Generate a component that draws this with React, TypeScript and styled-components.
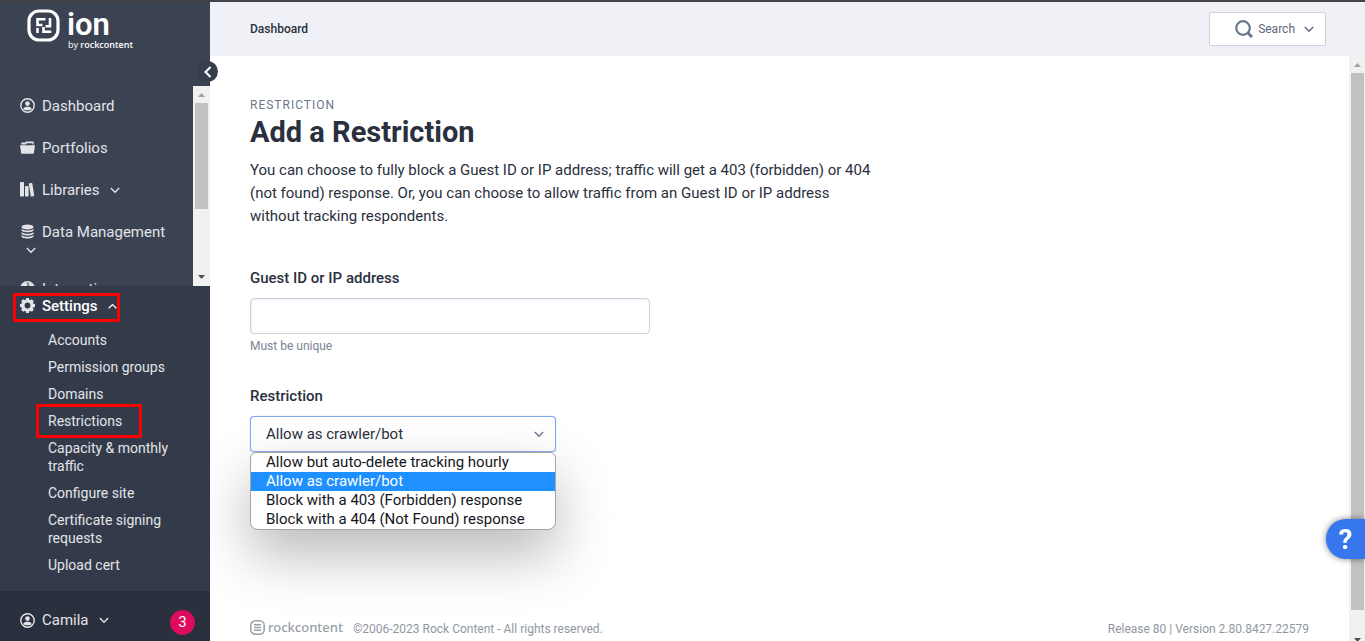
import React from 'react';
import styled, { createGlobalStyle, css } from 'styled-components';

const GlobalStyle = createGlobalStyle`
  *, *::before, *::after { box-sizing: border-box; }
  body {
    margin: 0;
    font-family: Roboto, "Liberation Sans", sans-serif;
    font-size: 15px;
    color: #2a303d;
    background: #fff;
  }
  ul { list-style: none; margin: 0; padding: 0; }
  button, input, select { font: inherit; }
  a { color: inherit; text-decoration: none; }
`;

/* Shell */
const Shell = styled.div`
  display: flex;
  height: 100vh;
  border-top: 2px solid #434248;
  overflow: hidden;
`;

const Sidebar = styled.aside`
  position: relative;
  z-index: 1;
  flex: none;
  display: flex;
  flex-direction: column;
  width: 210px;
  background: #3b4353;
  color: #e3e4e8;
`;

const SidebarHeader = styled.header`
  display: flex;
  gap: 7px;
  flex: none;
  height: 84px;
  padding: 7px 0 0 27px;
  color: #fff;
`;

const Wordmark = styled.div`
  display: flex;
  flex-direction: column;
  font-size: 31px;
  font-weight: 600;
  line-height: 32px;
`;

const Byline = styled.span`
  padding-left: 1px;
  font-family: "Open Sans", sans-serif;
  font-size: 9px;
  font-weight: 400;
  line-height: 8px;
  white-space: nowrap;
  b { font-weight: 600; }
`;

const CollapseButton = styled.button`
  position: absolute;
  top: 59px;
  right: -8px;
  z-index: 2;
  display: flex;
  align-items: center;
  justify-content: center;
  width: 21px;
  height: 21px;
  padding: 0;
  border: 0;
  border-radius: 50%;
  background: #363e4d;
  color: #fff;
`;

const NavArea = styled.div`
  display: flex;
  flex: 1;
  min-height: 0;
  overflow: hidden;
`;

const NavList = styled.ul`
  flex: 1;
  display: flex;
  flex-direction: column;
  gap: 24px;
  padding: 11px 10px 0 20px;
`;

const NavLink = styled.a<{ $active?: boolean }>`
  position: relative;
  display: flex;
  flex-wrap: wrap;
  align-items: center;
  column-gap: 7px;
  line-height: 18px;
  color: ${(p) => (p.$active ? '#fff' : 'inherit')};
  font-weight: ${(p) => (p.$active ? 500 : 400)};
  > svg { margin-bottom: 1px; }
`;

const Caret = styled.span<{ $wrapped?: boolean }>`
  display: flex;
  align-items: center;
  height: 15px;
  margin-left: 3px;
  ${(p) =>
    p.$wrapped &&
    css`
      flex-basis: 100%;
      padding: 3px 0 0 3px;
    `}
`;

/* Scrollbars */
const Track = styled.div<{ $width: number; $below: number }>`
  flex: none;
  display: flex;
  flex-direction: column;
  align-items: center;
  width: ${(p) => p.$width}px;
  margin-bottom: -${(p) => p.$below}px;
  background: #f1f1f1;
  overflow: hidden;
`;

const Arrow = styled.span<{ $down?: boolean }>`
  flex: none;
  display: flex;
  align-items: center;
  justify-content: center;
  height: 17px;
  color: ${(p) => (p.$down ? '#505050' : '#a3a3a3')};
  transform: ${(p) => (p.$down ? 'rotate(180deg)' : 'none')};
`;

const Rail = styled.div`
  flex: 1;
  width: 13px;
`;

const Thumb = styled.div<{ $share: number }>`
  height: ${(p) => p.$share}%;
  background: #c1c1c1;
`;

/* Settings group */
const SettingsPanel = styled.nav`
  flex: none;
  padding: 11px 20px 17px;
  background: #333b4a;
`;

const SubList = styled.ul`
  display: flex;
  flex-direction: column;
  gap: 9px;
  padding: 16px 0 0 28px;
  font-size: 14px;
  line-height: 18px;
`;

const SubLink = styled.a`
  position: relative;
  display: block;
`;

const Highlight = styled.span<{ $inset: string }>`
  position: absolute;
  inset: ${(p) => p.$inset};
  border: 3px solid #f00;
  border-radius: 1px;
  pointer-events: none;
`;

const UserBar = styled.footer`
  flex: none;
  display: flex;
  align-items: center;
  justify-content: space-between;
  height: 50px;
  padding: 8px 15px 0 20px;
  background: #2a303d;
`;

const UserButton = styled.button`
  display: flex;
  align-items: center;
  gap: 7px;
  padding: 0;
  border: 0;
  background: none;
  color: inherit;
`;

const Badge = styled.span`
  display: flex;
  align-items: center;
  justify-content: center;
  width: 25px;
  height: 25px;
  margin-top: 4px;
  border-radius: 50%;
  background: #dc0b5b;
  color: #fff;
`;

/* Main column */
const Main = styled.div`
  flex: 1;
  min-width: 0;
  display: flex;
  flex-direction: column;
`;

const TopBar = styled.header`
  flex: none;
  display: flex;
  align-items: center;
  justify-content: space-between;
  height: 54px;
  padding: 0 39px 0 40px;
  background: #f0f1f7;
  font-size: 12px;
`;

const Crumb = styled.a`
  font-weight: 500;
`;

const SearchButton = styled.button`
  display: flex;
  align-items: center;
  justify-content: flex-end;
  gap: 5px;
  width: 117px;
  height: 34px;
  padding: 0 11px 0 0;
  border: 1px solid #cbd1df;
  border-radius: 2px;
  background: #fff;
  color: #5c667a;
  font-size: 12px;
  svg:last-child { margin-left: 4px; }
`;

const Body = styled.div`
  flex: 1;
  display: flex;
  min-height: 0;
`;

const Page = styled.main`
  flex: 1;
  display: flex;
  flex-direction: column;
  justify-content: space-between;
  padding: 41px 40px 2px;
`;

const Eyebrow = styled.p`
  margin: 0;
  font-size: 12px;
  line-height: 16px;
  letter-spacing: 1px;
  color: #6b778c;
`;

const Title = styled.h1`
  margin: 0;
  font-size: 29px;
  font-weight: 700;
  line-height: 38px;
`;

const Intro = styled.p`
  max-width: 630px;
  margin: 8px 0 0;
  line-height: 23px;
`;

const Field = styled.div<{ $width: number; $space: number }>`
  position: relative;
  display: flex;
  flex-direction: column;
  width: ${(p) => p.$width}px;
  margin-top: ${(p) => p.$space}px;
`;

const Label = styled.label`
  margin-bottom: 10px;
  font-weight: 500;
  line-height: 20px;
`;

const TextInput = styled.input`
  height: 36px;
  padding: 0 15px;
  border: 1px solid #cbd1df;
  border-radius: 4px;
  box-shadow: inset 1px 1px 2px #eceef4;
`;

const Hint = styled.p`
  margin: 4px 0 0;
  font-size: 12px;
  line-height: 16px;
  color: #7a8496;
`;

const SelectBox = styled.div`
  position: relative;
  display: grid;
  align-items: center;
  color: #6b778c;
  > * { grid-area: 1 / 1; }
  svg {
    justify-self: end;
    margin-right: 12px;
    z-index: 1;
    pointer-events: none;
  }
`;

const Select = styled.select`
  appearance: none;
  width: 100%;
  height: 36px;
  padding: 0 15px;
  border: 1px solid #84a9ee;
  border-radius: 4px;
  background: #fff;
  box-shadow: 0 0 1px #84a9ee;
  color: #2a303d;
`;

const Options = styled.ul`
  position: absolute;
  top: 100%;
  left: 0;
  right: 0;
  border: 1px solid #a6a6a6;
  border-radius: 6px 6px 8px 8px;
  background: #fff;
  box-shadow: 0 25px 56px rgba(0, 0, 0, 0.28);
  color: #14171d;
  overflow: hidden;
`;

const Option = styled.li<{ $selected?: boolean }>`
  padding: 0 15px;
  line-height: 19px;
  ${(p) =>
    p.$selected &&
    css`
      background: #1e90ff;
      color: #fff;
    `}
`;

const PageFooter = styled.footer`
  display: flex;
  align-items: center;
  color: #9097a3;
  font-size: 12px;
  line-height: 16px;
`;

const FooterLogo = styled.a`
  display: flex;
  align-items: center;
  gap: 3px;
  margin: 0 10px 4px 0;
  font-family: "Noto Sans", sans-serif;
  font-size: 13px;
  font-weight: 500;
  color: #98a0a6;
`;

const Release = styled.span`
  margin-left: auto;
`;

const HelpButton = styled.button`
  position: fixed;
  right: 0;
  bottom: 82px;
  z-index: 3;
  width: 39px;
  height: 40px;
  padding: 0;
  border: 0;
  border-radius: 20px 0 0 20px;
  background: #3677ee;
  box-shadow: 0 0 6px rgba(0, 0, 0, 0.5);
  color: #fff;
  font-size: 28px;
  font-weight: 700;
`;

/* Drawings */
const Chevron = ({ up, size = 10 }: { up?: boolean; size?: number }) => (
  <svg width={size} height={size} viewBox="0 0 10 10" fill="none" stroke="currentColor" strokeWidth="1.4">
    <path d={up ? 'M.8 7 5 2.8 9.2 7' : 'M.8 3 5 7.2 9.2 3'} />
  </svg>
);

const IonMark = () => (
  <svg width="33" height="33" viewBox="0 0 33 33" fill="none" stroke="#fff" strokeWidth="3.200">
    <rect x="2" y="2" width="29" height="29" rx="10" />
    <path d="M18.500 10.300H10.500V16h5M23 9v8.300h-4.500M24.300 22.700h-7.800V18M10.500 24v-5" strokeWidth="2.600" />
  </svg>
);

const UserIcon = () => (
  <svg width="15" height="15" viewBox="0 0 15 15">
    <circle cx="7.5" cy="7.5" r="6.7" fill="none" stroke="currentColor" strokeWidth="1.4" />
    <circle cx="7.5" cy="5.6" r="2.3" fill="currentColor" />
    <path d="M3.2 11.2c.3-1.6 1.8-2.1 3.2-2.5h2.2c1.4.4 2.9.9 3.2 2.5-2 1.5-6.6 1.5-8.6 0z" fill="currentColor" />
  </svg>
);

const FolderIcon = () => (
  <svg width="15" height="15" viewBox="0 0 15 15" fill="currentColor">
    <path d="M1.300 4.400V3.200c0-.5.300-.8.800-.8h3.200l.9-.8h6.700c.5 0 .8.300.8.800v2H12.500V3.200H6.800l-.9 1.200zM0 5.200h15l-1.200 8c-.1.400-.3.600-.7.600H1.900c-.4 0-.6-.2-.7-.6z" />
  </svg>
);

const BooksIcon = () => (
  <svg width="15" height="15" viewBox="0 0 15 15" fill="currentColor">
    <rect x="0" y="0" width="4" height="14.500" rx=".8" />
    <rect x="5" y="4" width="3.600" height="10.500" rx=".8" />
    <rect x="9.800" y="1" width="3.500" height="13.500" rx=".8" transform="rotate(-9 11.500 8)" />
  </svg>
);

const DatabaseIcon = () => (
  <svg width="15" height="15" viewBox="0 0 15 15" fill="currentColor">
    <ellipse cx="7.500" cy="3" rx="6" ry="2.500" />
    <path d="M1.500 4.800c1.600 2.400 10.400 2.400 12 0v1.300c0 3-12 3-12 0zM1.500 7.900c1.600 2.400 10.400 2.400 12 0v1.300c0 3-12 3-12 0zM1.500 11c1.600 2.400 10.400 2.400 12 0v1.300c0 3-12 3-12 0z" />
  </svg>
);

const GlobeIcon = () => (
  <svg width="15" height="15" viewBox="0 0 15 15" fill="none" stroke="currentColor">
    <circle cx="7.500" cy="7.500" r="6.700" strokeWidth="1.400" />
    <path d="M2.500 3.500 6 1.500l1.500 2-2 3-3 1zM9 1.500l4 3-1.500 5-2-1.500z" fill="currentColor" />
  </svg>
);

const GearIcon = () => (
  <svg width="15" height="15" viewBox="0 0 15 15">
    <circle cx="7.500" cy="7.500" r="4.500" fill="none" stroke="#e3e4e8" strokeWidth="3.200" />
    {[0, 45, 90, 135, 180, 225, 270, 315].map((angle) => (
      <path key={angle} d="M5.500 2.500 6.100 0h2.800L9.500 2.500z" fill="#e3e4e8" transform={`rotate(${angle} 7.500 7.500)`} />
    ))}
  </svg>
);

const SearchIcon = () => (
  <svg width="18" height="18" viewBox="0 0 18 18" fill="none" stroke="#6b778c">
    <circle cx="8" cy="8" r="6.800" strokeWidth="2.200" />
    <path d="m12.800 12.800 4.200 4.200" strokeWidth="3" />
  </svg>
);

const RockMark = () => (
  <svg width="15" height="15" viewBox="0 0 15 15" fill="none" stroke="currentColor" strokeWidth="1.500">
    <rect x=".8" y=".8" width="13.400" height="13.400" rx="4.500" />
    <path d="M4 4.800h7M4 7.500h7M4 10.200h7" />
  </svg>
);

const ArrowHead = () => (
  <svg width="7" height="4" viewBox="0 0 7 4">
    <path d="M0 4 3.500 0 7 4z" fill="currentColor" />
  </svg>
);

const Scrollbar = ({ share, width = 17, below = 0 }: { share: number; width?: number; below?: number }) => (
  <Track $width={width} $below={below} aria-hidden="true">
    <Arrow><ArrowHead /></Arrow>
    <Rail><Thumb $share={share} /></Rail>
    <Arrow $down><ArrowHead /></Arrow>
  </Track>
);

const navItems: { label: string; icon: React.ReactNode; caret?: 'inline' | 'wrapped' }[] = [
  { label: 'Dashboard', icon: <UserIcon /> },
  { label: 'Portfolios', icon: <FolderIcon /> },
  { label: 'Libraries', icon: <BooksIcon />, caret: 'inline' },
  { label: 'Data Management', icon: <DatabaseIcon />, caret: 'wrapped' },
  { label: 'Integrations', icon: <GlobeIcon /> },
];

const settingsItems = [
  'Accounts',
  'Permission groups',
  'Domains',
  'Restrictions',
  'Capacity & monthly traffic',
  'Configure site',
  'Certificate signing requests',
  'Upload cert',
];

const restrictionOptions = [
  'Allow but auto-delete tracking hourly',
  'Allow as crawler/bot',
  'Block with a 403 (Forbidden) response',
  'Block with a 404 (Not Found) response',
];

export default function App() {
  const [value, setValue] = React.useState(restrictionOptions[1]);

  return (
    <>
      <GlobalStyle />
      <Shell>
        <Sidebar>
          <SidebarHeader>
            <IonMark />
            <Wordmark>
              <span>ion</span>
              <Byline>by <b>rockcontent</b></Byline>
            </Wordmark>
          </SidebarHeader>
          <CollapseButton aria-label="Collapse menu">
            <svg width="8" height="12" viewBox="0 0 8 12" fill="none" stroke="currentColor" strokeWidth="2">
              <path d="M6.500 1 1.500 6l5 5" />
            </svg>
          </CollapseButton>
          <NavArea>
            <NavList>
              {navItems.map((item) => (
                <li key={item.label}>
                  <NavLink href="#">
                    {item.icon}
                    {item.label}
                    {item.caret && (
                      <Caret $wrapped={item.caret === 'wrapped'}><Chevron /></Caret>
                    )}
                  </NavLink>
                </li>
              ))}
            </NavList>
            <Scrollbar share={64} />
          </NavArea>
          <SettingsPanel>
            <NavLink href="#" $active>
              <GearIcon />
              Settings
              <Caret><Chevron up size={9} /></Caret>
              <Highlight $inset="-4px 70px -7px -7px" />
            </NavLink>
            <SubList>
              {settingsItems.map((label) => (
                <li key={label}>
                  <SubLink href="#">
                    {label}
                    {label === 'Restrictions' && <Highlight $inset="-8px 48px -8px -12px" />}
                  </SubLink>
                </li>
              ))}
            </SubList>
          </SettingsPanel>
          <UserBar>
            <UserButton>
              <UserIcon />
              Camila
              <Caret><Chevron /></Caret>
            </UserButton>
            <Badge>3</Badge>
          </UserBar>
        </Sidebar>
        <Main>
          <TopBar>
            <Crumb href="#">Dashboard</Crumb>
            <SearchButton>
              <SearchIcon />
              Search
              <Chevron />
            </SearchButton>
          </TopBar>
          <Body>
            <Page>
              <form>
                <Eyebrow>RESTRICTION</Eyebrow>
                <Title>Add a Restriction</Title>
                <Intro>
                  You can choose to fully block a Guest ID or IP address; traffic will get a 403 (forbidden) or 404
                  (not found) response. Or, you can choose to allow traffic from an Guest ID or IP address without
                  tracking respondents.
                </Intro>
                <Field $width={400} $space={40}>
                  <Label htmlFor="guest">Guest ID or IP address</Label>
                  <TextInput id="guest" type="text" />
                  <Hint>Must be unique</Hint>
                </Field>
                <Field $width={306} $space={32}>
                  <Label htmlFor="restriction">Restriction</Label>
                  <SelectBox>
                    <Select id="restriction" value={value} onChange={(e) => setValue(e.target.value)}>
                      {restrictionOptions.map((o) => <option key={o}>{o}</option>)}
                    </Select>
                    <Chevron />
                    <Options>
                      {restrictionOptions.map((o) => (
                        <Option key={o} $selected={o === value} onClick={() => setValue(o)}>{o}</Option>
                      ))}
                    </Options>
                  </SelectBox>
                </Field>
              </form>
              <PageFooter>
                <FooterLogo href="#"><RockMark />rockcontent</FooterLogo>
                ©2006-2023 Rock Content - All rights reserved.
                <Release>Release 80 | Version 2.80.8427.22579</Release>
              </PageFooter>
            </Page>
            <Scrollbar share={96} width={16} below={8} />
          </Body>
        </Main>
      </Shell>
      <HelpButton aria-label="Help">?</HelpButton>
    </>
  );
}
